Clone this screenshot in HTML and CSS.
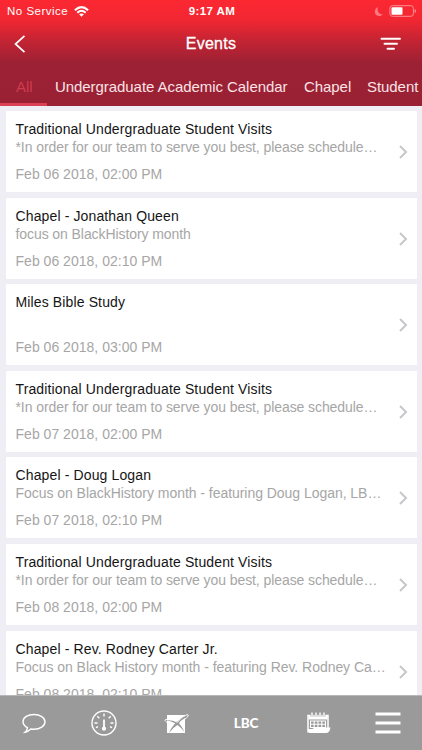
FILE: index.html
```html
<!DOCTYPE html>
<html lang="en">
<head>
<meta charset="utf-8">
<title>Events</title>
<link rel="stylesheet" href="styles.css">
</head>
<body>
<div class="app">
  <header class="header">
    <div class="status">
      <div class="carrier"><span>No Service</span>
        <svg width="15" height="11" viewBox="0 0 15 11" fill="none" stroke="#fff" stroke-width="2"><path d="M.9 4.2Q7.5-2 14.1 4.2M3.3 6.7q4.2-3.8 8.4 0"/><path d="M5.1 8.3q2.4-1.8 4.8 0L7.5 10.8z" fill="#fff" stroke="none"/></svg>
      </div>
      <span class="time">9:17 AM</span>
      <div class="power">
        <svg width="10" height="11" viewBox="0 0 10 11"><path d="M4 1C2.7 4.7 4.800 8.500 9 8.200C6.500 11.300 1 10.300.8 5.900C.8 3.500 2.200 1.600 4 1z" fill="#ff7880"/></svg>
        <svg width="28" height="12" viewBox="0 0 28 12"><rect x=".9" y=".7" width="23.500" height="10.600" rx="2.500" fill="none" stroke="#ff8c92"/><rect x="2.500" y="2.300" width="11" height="7.400" rx=".8" fill="#fff"/><path d="M25.600 4q1.500.4 1.500 2t-1.500 2z" fill="#ff8c92"/></svg>
      </div>
    </div>
    <div class="navbar">
      <svg class="back" width="12" height="18" viewBox="0 0 12 18"><path d="M10.500.8L1.500 9l9 8.200" fill="none" stroke="#fff" stroke-width="1.700"/></svg>
      <h1>Events</h1>
      <svg class="filter" width="22" height="14" viewBox="0 0 22 14"><path d="M1.500 1.800h18.500M4.500 6.800h12.500M7.500 11.800h6.500" stroke="#fff" stroke-width="1.900" stroke-linecap="round"/></svg>
    </div>
    <nav class="tabs">
      <span class="tab active">All</span>
      <span class="tab wide">Undergraduate Academic Calendar</span>
      <span class="tab chapel">Chapel</span>
      <span class="tab student">Student</span>
    </nav>
  </header>
  <main class="list">
    <article class="card"><div class="text"><h2>Traditional Undergraduate Student Visits</h2><p>*In order for our team to serve you best, please schedule…</p><time>Feb 06 2018, 02:00 PM</time></div><svg class="chev" viewBox="0 0 9 14"><path d="M1 1l6 6-6 6"/></svg></article>
    <article class="card"><div class="text"><h2>Chapel - Jonathan Queen</h2><p>focus on BlackHistory month</p><time>Feb 06 2018, 02:10 PM</time></div><svg class="chev" viewBox="0 0 9 14"><path d="M1 1l6 6-6 6"/></svg></article>
    <article class="card"><div class="text"><h2>Miles Bible Study</h2><p></p><time>Feb 06 2018, 03:00 PM</time></div><svg class="chev" viewBox="0 0 9 14"><path d="M1 1l6 6-6 6"/></svg></article>
    <article class="card"><div class="text"><h2>Traditional Undergraduate Student Visits</h2><p>*In order for our team to serve you best, please schedule…</p><time>Feb 07 2018, 02:00 PM</time></div><svg class="chev" viewBox="0 0 9 14"><path d="M1 1l6 6-6 6"/></svg></article>
    <article class="card"><div class="text"><h2>Chapel - Doug Logan</h2><p class="long">Focus on BlackHistory month - featuring Doug Logan, LB…</p><time>Feb 07 2018, 02:10 PM</time></div><svg class="chev" viewBox="0 0 9 14"><path d="M1 1l6 6-6 6"/></svg></article>
    <article class="card"><div class="text"><h2>Traditional Undergraduate Student Visits</h2><p>*In order for our team to serve you best, please schedule…</p><time>Feb 08 2018, 02:00 PM</time></div><svg class="chev" viewBox="0 0 9 14"><path d="M1 1l6 6-6 6"/></svg></article>
    <article class="card"><div class="text"><h2>Chapel - Rev. Rodney Carter Jr.</h2><p class="long">Focus on Black History month - featuring Rev. Rodney Ca…</p><time>Feb 08 2018, 02:10 PM</time></div><svg class="chev" viewBox="0 0 9 14"><path d="M1 1l6 6-6 6"/></svg></article>
  </main>
  <footer class="bottom">
    <svg width="26" height="28" viewBox="0 0 26 28" fill="none" stroke="#fff" stroke-width="1.400"><path d="M6.500 18.600C3.500 17 2 15 2 12.700C2 8.300 7 5.500 13 5.500s11 3 11 7.300s-5 7.500-11 7.500q-1.700 0-3.200-.3Q7 22.800 4 23.200Q6.300 21.300 6.500 18.600z"/></svg>
    <svg width="28" height="28" viewBox="0 0 28 28" fill="none" stroke="#fff" stroke-width="1.400"><circle cx="14" cy="14" r="12"/><path d="M14 4.500v3M4.500 14h3M20.500 14h3M7.300 7.300l2 2M20.700 7.300l-2 2M6 18.700l2-1M22 18.700l-2-1"/><path d="M14 10.500v8" stroke-width="1.800"/><circle cx="14" cy="19.700" r="2.100" fill="#fff" stroke="none"/></svg>
    <svg width="28" height="28" viewBox="0 0 28 28"><path d="M5 6h18v18H5z" fill="#fff"/><path d="M4 11Q10 10.800 15 12.800Q18 9 24 6.500L23 9Q18.500 11.500 17 14.300Q20 17.500 22.500 23Q18.500 18 15.500 16Q11 18.500 7 24Q9.500 18 13.200 14.200Q8 11.800 4 11z" fill="#9b9a9b"/><path d="M5 13.500Q.8 10.300 5 10.300Q11 10.500 15.500 13.300Q20 6.500 25 5.600Q28.500 6 22.500 10.500" fill="none" stroke="#fff" stroke-width=".9"/></svg>
    <span class="logo">LBC</span>
    <svg width="28" height="28" viewBox="0 0 28 28" fill="none" stroke="#fff"><path d="M4 23.500V6.500h20V19" stroke-width="1.500"/><path d="M4.500 10.500V6.500h19v4z" fill="#fff" stroke="none"/><path d="M8 3.500v4M12 3.500v4M16 3.500v4M20 3.500v4" stroke="#9b9a9b" stroke-width="2.800"/><path d="M8 3.500v4M12 3.500v4M16 3.500v4M20 3.500v4" stroke-width="1.400"/><path d="M6.500 12h15v6.500h-15zM6.500 15.200h15M10.200 12v6.500M14 12v6.500M17.800 12v6.500" stroke-width="1.100"/><path d="M4 20h4.500l2-1.500h16q-1 5.500-4.500 5.500H6q-2 0-2-2z" fill="#fff" stroke="none"/></svg>
    <svg width="28" height="28" viewBox="0 0 28 28"><path d="M1.500 5h25M1.500 14h25M1.500 23h25" stroke="#fff" stroke-width="3"/></svg>
  </footer>
</div>
</body>
</html>
```
FILE: styles.css
```css
* { box-sizing: border-box; }
body { margin: 0; font-family: "Liberation Sans", Arial, sans-serif; }
.app { width: 422px; height: 750px; display: flex; flex-direction: column; overflow: hidden; background: #efeef5; }
.header { height: 106px; flex: none; color: #fff; background: linear-gradient(#fc2832 0, #f12732 20px, #c52433 40px, #9c2134 63px, #9a2033 100%); }
.status { height: 22px; display: grid; grid-template-columns: 1fr auto 1fr; align-items: center; font-size: 11.500px; }
.carrier { display: flex; align-items: center; gap: 6px; padding-left: 7px; letter-spacing: .5px; }
.time { font-weight: 700; font-size: 11.500px; letter-spacing: .4px; padding-left: 2px; }
.power { display: flex; justify-content: flex-end; align-items: center; gap: 5px; padding-right: 5px; }
.navbar { height: 43px; display: grid; grid-template-columns: 1fr auto 1fr; align-items: center; }
.back { margin-left: 14px; }
.navbar h1 { margin: 0; font-size: 16px; font-weight: 400; letter-spacing: .25px; -webkit-text-stroke: .3px #fff; }
.filter { justify-self: end; margin-right: 20px; }
.tabs { display: flex; height: 41px; white-space: nowrap; font-size: 15px; line-height: 43px; letter-spacing: -.06px; color: #f9e3e6; }
.tab { flex: none; }
.tab.active { width: 47px; padding-left: 16px; color: #d13b50; border-bottom: 3px solid #dc4054; }
.wide { width: 249px; padding-left: 8px; }
.chapel { width: 63px; padding-left: 8px; }
.student { padding-left: 8px; }
.list { height: 589px; flex: none; overflow: hidden; padding: 5px 5.500px 0; display: flex; flex-direction: column; gap: 5.600px; }
.card { height: 81px; flex: none; padding: 9px 9px 0 10px; display: flex; justify-content: space-between; background: #fff; border-radius: 1px; }
.text { white-space: nowrap; }
.text h2, .text p, .text time { display: block; margin: 0; font-weight: 400; font-size: 14px; }
.text h2 { line-height: 18px; color: #151515; letter-spacing: .13px; }
.text p { height: 18px; line-height: 18px; color: #a6a6a6; letter-spacing: -.08px; }
.text .long { letter-spacing: -.04px; }
.text time { margin-top: 9px; line-height: 18px; color: #a6a6a6; letter-spacing: .02px; }
.chev { width: 9px; height: 14px; margin-top: 25px; fill: none; stroke: #c7c7cb; stroke-width: 2; }
.bottom { height: 55px; flex: none; display: grid; grid-template-columns: 67px 74px 69px 72px 71px 69px; align-items: center; justify-items: center; background: #9b9a9b; border-top: 1px solid #b7b6b8; }
.logo { font: 900 13.500px Lato, sans-serif; color: #fff; letter-spacing: -.2px; }
```
